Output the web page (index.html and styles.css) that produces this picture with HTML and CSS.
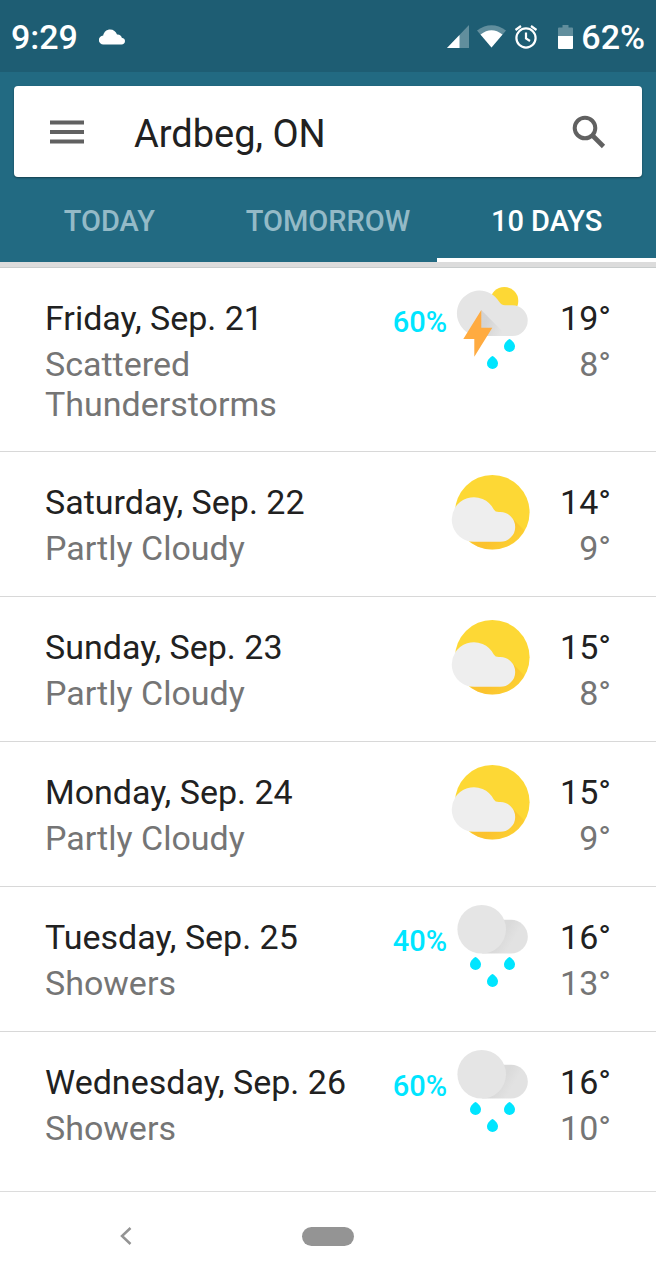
FILE: index.html
```html
<!DOCTYPE html>
<html lang="en">

    <head>
        <meta charset="UTF-8">
        <meta name="viewport" content="width=device-width, initial-scale=1.0">
        <title>Weather</title>

        <link rel="stylesheet" href="styles.css">
    </head>

    <body>
        <!-- shared weather icons -->
        <svg class="sprite" aria-hidden="true">
            <defs>
                <linearGradient id="sunShadow" gradientUnits="userSpaceOnUse" x1="56" y1="52" x2="72" y2="68">
                    <stop offset="0" stop-color="#f9a825" stop-opacity="0.45" />
                    <stop offset="1" stop-color="#f9a825" stop-opacity="0.15" />
                </linearGradient>
                <linearGradient id="boltShadow" gradientUnits="userSpaceOnUse" x1="34" y1="38" x2="52" y2="46">
                    <stop offset="0" stop-color="#9e9e9e" stop-opacity="0.25" />
                    <stop offset="1" stop-color="#9e9e9e" stop-opacity="0" />
                </linearGradient>
                <linearGradient id="puffShadow" gradientUnits="userSpaceOnUse" x1="54" y1="26" x2="64" y2="32">
                    <stop offset="0" stop-color="#dadada" />
                    <stop offset="1" stop-color="#e2e2e2" />
                </linearGradient>
                <clipPath id="sunClip">
                    <circle cx="42.3" cy="40.3" r="37.3" />
                </clipPath>
            </defs>
            <symbol id="drop" viewBox="0 0 11 13">
                <path d="M5.5 0C6.6 0 11 4 11 7.4a5.5 5.5 0 0 1-11 0C0 4 4.4 0 5.5 0z" fill="#00e5ff" />
            </symbol>
            <symbol id="partly" viewBox="0 -4 84 88">
                <circle cx="42.3" cy="40.3" r="37.3" fill="#fdd835" />
                <path clip-path="url(#sunClip)" d="M60 44L84 68V84H34L20 69z" fill="url(#sunShadow)" />
                <path d="M24 69.7a22.2 22.2 0 1 1 19.8-32.2q1.4 2.6 5 2.6h1.6a14.8 14.8 0 0 1 0 29.6z" fill="#eeeeee" />
            </symbol>
            <symbol id="showers" viewBox="0 -4 84 88">
                <path d="M32 46.5L50 12.8H61a16.8 16.8 0 0 1 0 33.7z" fill="url(#puffShadow)" />
                <circle cx="31.7" cy="22.2" r="24.3" fill="#e5e5e5" />
                <use href="#drop" x="20" y="50" width="11" height="13" />
                <use href="#drop" x="54" y="50" width="11" height="13" />
                <use href="#drop" x="37" y="67" width="11" height="13" />
            </symbol>
            <symbol id="storm" viewBox="0 -4 84 88">
                <circle cx="54.3" cy="13" r="14" fill="#fdd835" />
                <path d="M30 48a22.7 22.7 0 1 1 19-34.5q2 3.7 6 3.7h7.5a15.2 15.4 0 0 1 0 30.8z" fill="#e5e5e5" />
                <path d="M31.3 22L57 48H28z" fill="url(#boltShadow)" />
                <path d="M31.3 22v17.7h11l-18 29V51h-11z" fill="#ffab40" />
                <use href="#drop" x="54" y="51" width="11" height="13" />
                <use href="#drop" x="37" y="68" width="11" height="13" />
            </symbol>
        </svg>

        <div class="status-bar">
            <span>9:29</span>
            <svg class="status-cloud" width="26" height="16" viewBox="0 0 26 16" aria-hidden="true">
                <path d="M4.5 15.5a4.5 4.5 0 0 1-.3-9C5 2.5 8 .5 11 .5c3.500 0 6 2 7 5 2.500-.3 4.500 1.300 4.800 3.300 1.900.3 3.200 1.500 3.200 3.300 0 2-1.500 3.400-3.500 3.400z" fill="#fff" />
            </svg>
            <div class="status-icons">
                <svg width="22" height="23" viewBox="0 0 22 23" aria-hidden="true">
                    <path d="M0 23L22 0v23z" fill="#fff" opacity="0.3" />
                    <path d="M0 23L12.5 10v13z" fill="#fff" />
                </svg>
                <svg width="29" height="23" viewBox="0 0 29 23" aria-hidden="true">
                    <path d="M0 5.5Q14.5-5 29 5.5L14.5 22.5z" fill="#fff" opacity="0.3" />
                    <path d="M3.5 9.5Q14.5 1 25.5 9.5L14.5 22.5z" fill="#fff" />
                </svg>
                <svg width="24" height="24" viewBox="0 0 24 24" fill="none" stroke="#fff" stroke-width="2.2" aria-hidden="true">
                    <circle cx="12" cy="13" r="9.6" />
                    <path d="M12 7.5V13.5L16 16M1.5 5L7 1M22.5 5L17 1" />
                </svg>
                <svg class="battery" width="15" height="24" viewBox="0 0 15 24" aria-hidden="true">
                    <path d="M0 11V3.5Q0 2.5 1 2.5H4.5V0h6v2.5H14q1 0 1 1V11z" fill="#fff" opacity="0.3" />
                    <path d="M0 11h15v12q0 1-1 1H1q-1 0-1-1z" fill="#fff" />
                </svg>
                <span>62%</span>
            </div>
        </div>

        <header class="header">
            <form class="search">
                <button type="button" class="icon-btn" aria-label="Menu">
                    <svg width="34" height="24" viewBox="0 0 34 24" aria-hidden="true">
                        <path d="M0 2.5h34M0 12h34M0 21.5h34" stroke="#616161" stroke-width="4" />
                    </svg>
                </button>
                <input type="text" name="place" class="place" value="Ardbeg, ON" aria-label="Location">
                <button type="submit" class="icon-btn" aria-label="Search">
                    <svg width="34" height="34" viewBox="0 0 34 34" fill="none" stroke="#616161" aria-hidden="true">
                        <circle cx="13" cy="13" r="10.3" stroke-width="4" />
                        <path d="M20 20L31.5 31.5" stroke-width="4.6" />
                    </svg>
                </button>
            </form>
            <nav class="tabs">
                <a href="#today">TODAY</a>
                <a href="#tomorrow">TOMORROW</a>
                <a href="#days" class="active" aria-current="page">10 DAYS</a>
            </nav>
        </header>

        <main class="days" id="days">
            <section class="day">
                <div class="info">
                    <h2>Friday, Sep. 21</h2>
                    <p>Scattered Thunderstorms</p>
                </div>
                <span class="chance">60%</span>
                <svg class="icon" aria-hidden="true"><use href="#storm" /></svg>
                <div class="temps">
                    <span>19°</span>
                    <span class="low">8°</span>
                </div>
            </section>
            <section class="day">
                <div class="info">
                    <h2>Saturday, Sep. 22</h2>
                    <p>Partly Cloudy</p>
                </div>
                <svg class="icon" aria-hidden="true"><use href="#partly" /></svg>
                <div class="temps">
                    <span>14°</span>
                    <span class="low">9°</span>
                </div>
            </section>
            <section class="day">
                <div class="info">
                    <h2>Sunday, Sep. 23</h2>
                    <p>Partly Cloudy</p>
                </div>
                <svg class="icon" aria-hidden="true"><use href="#partly" /></svg>
                <div class="temps">
                    <span>15°</span>
                    <span class="low">8°</span>
                </div>
            </section>
            <section class="day">
                <div class="info">
                    <h2>Monday, Sep. 24</h2>
                    <p>Partly Cloudy</p>
                </div>
                <svg class="icon" aria-hidden="true"><use href="#partly" /></svg>
                <div class="temps">
                    <span>15°</span>
                    <span class="low">9°</span>
                </div>
            </section>
            <section class="day">
                <div class="info">
                    <h2>Tuesday, Sep. 25</h2>
                    <p>Showers</p>
                </div>
                <span class="chance">40%</span>
                <svg class="icon" aria-hidden="true"><use href="#showers" /></svg>
                <div class="temps">
                    <span>16°</span>
                    <span class="low">13°</span>
                </div>
            </section>
            <section class="day">
                <div class="info">
                    <h2>Wednesday, Sep. 26</h2>
                    <p>Showers</p>
                </div>
                <span class="chance">60%</span>
                <svg class="icon" aria-hidden="true"><use href="#showers" /></svg>
                <div class="temps">
                    <span>16°</span>
                    <span class="low">10°</span>
                </div>
            </section>
        </main>

        <div class="nav-bar">
            <button type="button" aria-label="Back">
                <svg width="12" height="18" viewBox="0 0 12 18" aria-hidden="true">
                    <path d="M10.5 1L2 9l8.5 8" fill="none" stroke="#949494" stroke-width="2.5" />
                </svg>
            </button>
            <button type="button" aria-label="Home"><span class="pill"></span></button>
        </div>
    </body>

</html>
```

FILE: styles.css
```css
* {
    box-sizing: border-box;
}

body {
    margin: 0;
    min-height: 100vh;
    display: flex;
    flex-direction: column;
    font-family: Roboto, sans-serif;
    font-size: 34px;
    line-height: 40px;
    color: #212121;
    background-color: #fff;
}

button {
    padding: 0;
    border: none;
    background: none;
    cursor: pointer;
    display: flex;
    align-items: center;
    justify-content: center;
}

svg {
    display: block;
    flex-shrink: 0;
}

.sprite {
    position: absolute;
    width: 0;
    height: 0;
}

.status-bar {
    display: flex;
    align-items: center;
    height: 72px;
    padding: 1px 11px 0;
    background-color: #1e5d73;
    color: #fff;
    font-weight: 500;
}

.status-cloud {
    margin-left: 21px;
}

.status-icons {
    display: flex;
    align-items: center;
    gap: 8px;
    margin-left: auto;
}

.battery {
    margin-left: 12px;
}

.header {
    background-color: #226a82;
    padding-top: 14px;
}

.search {
    display: flex;
    align-items: center;
    height: 91px;
    margin: 0 14px;
    padding: 0 18px;
    background-color: #fff;
    border-radius: 4px;
    box-shadow: 0 1px 2px rgba(0, 0, 0, 0.4);
}

.icon-btn {
    width: 70px;
    height: 70px;
}

.place {
    flex: 1;
    min-width: 0;
    margin-left: 32px;
    padding: 4px 0 0;
    border: none;
    outline: none;
    background: none;
    color: #212121;
    font-family: inherit;
    font-size: 38px;
    line-height: 44px;
}

.tabs {
    display: grid;
    grid-template-columns: repeat(3, 1fr);
}

.tabs a {
    padding: 24px 0 17px;
    border-bottom: 4px solid transparent;
    color: #94bac7;
    font-size: 29px;
    font-weight: 500;
    text-align: center;
    text-decoration: none;
}

.tabs .active {
    color: #fff;
    border-bottom-color: #fff;
}

.days {
    flex: 1;
    border-top: 5px solid #dcdcdc;
}

.day {
    display: flex;
    align-items: flex-start;
    padding: 16px 45px 28px;
    border-bottom: 1px solid #d8d8d8;
}

.day:first-child {
    border-top: 1px solid #c8cccc;
    padding-bottom: 27px;
}

.day:last-child {
    border-bottom: none;
}

.info {
    flex: 1;
    padding-top: 14px;
}

.info h2,
.info p {
    margin: 0;
    font-size: 34px;
    font-weight: 400;
}

.info p {
    margin-top: 6px;
    color: #757575;
}

.chance {
    padding: 18px 3px 0 0;
    color: #00e5ff;
    font-size: 29px;
    font-weight: 500;
}

.icon {
    width: 84px;
    height: 88px;
}

.temps {
    display: flex;
    flex-direction: column;
    gap: 6px;
    width: 77px;
    padding-top: 14px;
    text-align: right;
}

.low {
    color: #757575;
}

.nav-bar {
    display: grid;
    grid-template-columns: repeat(3, 1fr);
    height: 89px;
    padding: 0 25px;
    border-top: 1px solid #dcdcdc;
}

.pill {
    width: 52px;
    height: 19px;
    border-radius: 10px;
    background-color: #949494;
}
```
